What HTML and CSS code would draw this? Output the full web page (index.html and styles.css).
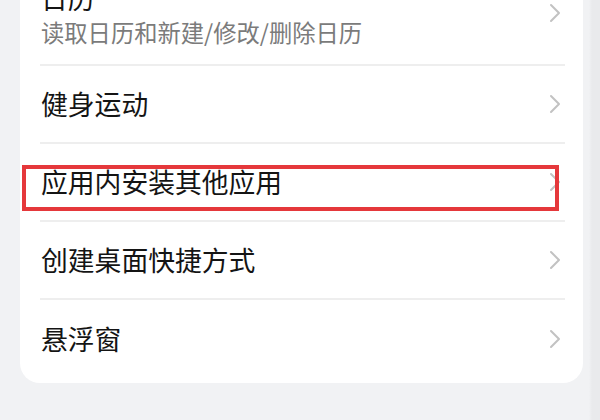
FILE: index.html
```html
<!DOCTYPE html>
<html lang="zh-CN">
<head>
<meta charset="utf-8">
<title>权限</title>
<link rel="stylesheet" href="styles.css">
</head>
<body>
<div class="card">
  <div class="row row-tall">
    <div class="texts">
      <div class="title">日历</div>
      <div class="sub">读取日历和新建/修改/删除日历</div>
    </div>
    <svg class="chev" viewBox="0 0 12 20" width="12" height="20"><polyline points="2,2 10,10 2,18"/></svg>
  </div>
  <div class="row">
    <div class="title">健身运动</div>
    <svg class="chev" viewBox="0 0 12 20" width="12" height="20"><polyline points="2,2 10,10 2,18"/></svg>
  </div>
  <div class="row marked">
    <div class="title">应用内安装其他应用</div>
    <svg class="chev" viewBox="0 0 12 20" width="12" height="20"><polyline points="2,2 10,10 2,18"/></svg>
    <span class="mark"></span>
  </div>
  <div class="row">
    <div class="title">创建桌面快捷方式</div>
    <svg class="chev" viewBox="0 0 12 20" width="12" height="20"><polyline points="2,2 10,10 2,18"/></svg>
  </div>
  <div class="row last">
    <div class="title">悬浮窗</div>
    <svg class="chev" viewBox="0 0 12 20" width="12" height="20"><polyline points="2,2 10,10 2,18"/></svg>
  </div>
</div>
</body>
</html>
```
FILE: styles.css
```css
html, body {
  margin: 0;
  padding: 0;
  height: 100%;
  overflow: hidden;
}
body {
  background: linear-gradient(to right, #f1f2f4 589px, #e9eaec 592px);
  font-family: "Noto Sans CJK SC", "Noto Sans", sans-serif;
}
.card {
  width: 563px;
  margin: -38px 0 0 20px;
  background: #ffffff;
  border-radius: 0 0 20px 20px;
  padding-bottom: 5px;
}
.row {
  position: relative;
  display: flex;
  align-items: center;
  justify-content: space-between;
  height: 76px;
  margin: 0 18px 0 20px;
  padding: 0 4px 0 1px;
  border-bottom: 2px solid #eeeeee;
}
.row-tall {
  height: 102px;
}
.row.last {
  border-bottom: none;
  height: 78px;
}
.texts {
  display: flex;
  flex-direction: column;
}
.title {
  font-size: 26.8px;
  line-height: 34px;
  color: #141414;
}
.sub {
  font-size: 23.3px;
  line-height: 28px;
  margin-top: 3px;
  color: #7b7b7b;
}
.chev {
  flex: none;
  fill: none;
  stroke: #c2c2c2;
  stroke-width: 2;
  stroke-linecap: round;
  stroke-linejoin: round;
}
.mark {
  position: absolute;
  left: -18px;
  right: 6px;
  top: 21px;
  height: 38px;
  border: 4px solid #e5383b;
}
```
